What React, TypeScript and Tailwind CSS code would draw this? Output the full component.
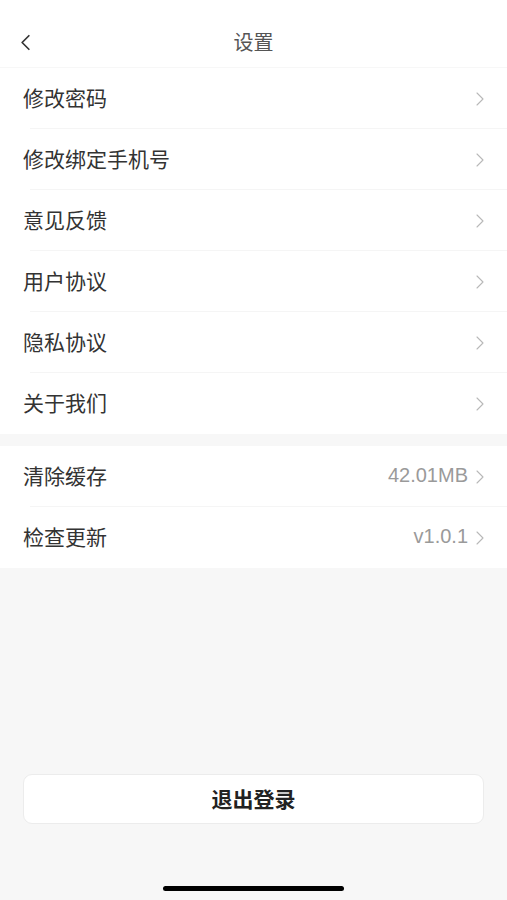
import { ChevronLeft, ChevronRight } from "lucide-react";

const groupOne = ["修改密码", "修改绑定手机号", "意见反馈", "用户协议", "隐私协议", "关于我们"];
const groupTwo = [
  { label: "清除缓存", value: "42.01MB" },
  { label: "检查更新", value: "v1.0.1" },
];

function Row({ label, value, last }: { label: string; value?: string; last?: boolean }) {
  return (
    <div className="relative flex h-[61px] items-center justify-between bg-white pl-[23px] pr-[15px]">
      <span className="-mt-[2px] text-[21px] text-[#333]">{label}</span>
      <div className="flex items-center">
        {value && (
          <span className="-mt-[3px] text-[20px] font-light text-[#9a9a9a] [font-family:'Liberation_Sans',sans-serif]">
            {value}
          </span>
        )}
        <ChevronRight className="size-[24px] text-[#b8b8b8]" strokeWidth={1.1} />
      </div>
      {!last && <div className="absolute bottom-0 left-[30px] right-0 h-px bg-[#f5f5f5]" />}
    </div>
  );
}

export default function App() {
  return (
    <main className="flex h-[900px] w-full flex-col bg-[#f7f7f7] [font-family:'Noto_Sans_CJK_SC','Liberation_Sans',sans-serif]">
      {/* header */}
      <header className="relative flex h-[68px] items-center justify-center border-b border-[#f7f7f7] bg-white pt-[16px]">
        <ChevronLeft className="absolute left-[12px] top-[29px] size-[27px] text-[#333]" strokeWidth={1.5} />
        <h1 className="text-[20px] text-[#555]">设置</h1>
      </header>

      <section>
        {groupOne.map((label, i) => (
          <Row key={label} label={label} last={i === groupOne.length - 1} />
        ))}
      </section>

      <section className="mt-[12px]">
        {groupTwo.map((item, i) => (
          <Row key={item.label} label={item.label} value={item.value} last={i === groupTwo.length - 1} />
        ))}
      </section>

      <div className="flex-1" />

      <div className="px-[23px] pb-[62px]">
        <button className="flex h-[50px] w-full items-center justify-center rounded-[9px] border border-[#ececec] bg-white text-[21px] font-bold text-[#222]">
          退出登录
        </button>
      </div>

      <div className="flex justify-center pb-[9px]">
        <div className="h-[5px] w-[181px] rounded-full bg-black" />
      </div>
    </main>
  );
}
